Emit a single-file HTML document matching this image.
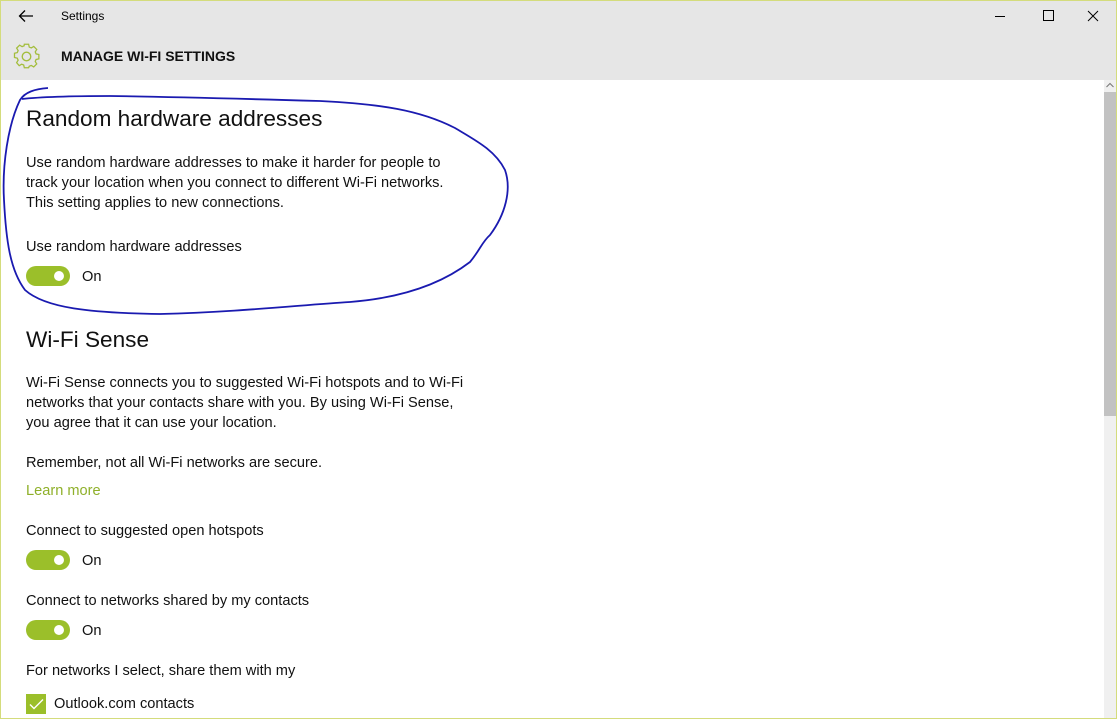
<!DOCTYPE html>
<html><head><style>
body{margin:0;width:1117px;height:719px;overflow:hidden;font-family:"Liberation Sans",sans-serif;background:#fff;position:relative}
.frame{position:absolute;inset:0;border:1px solid #d4dc7c;box-sizing:border-box;pointer-events:none;z-index:5}
.hdr{position:absolute;left:0;top:0;width:1117px;height:80px;background:#e6e6e6}
.t{position:absolute;color:#000;white-space:nowrap}
.p{font-size:14.6px;line-height:20px;color:#111}
.h{font-size:22.6px;color:#111}
.tog{position:absolute;left:26px;width:44px;height:20px;border-radius:10px;background:#9bbf2a}
.tog::after{content:"";position:absolute;right:6px;top:5px;width:10px;height:10px;border-radius:50%;background:#fff}
</style></head><body>
<div class="hdr"></div>
<svg style="position:absolute;left:18px;top:9px" width="16" height="14"><path d="M15 7H2M7 1.5L1.5 7 7 12.5" stroke="#000" stroke-width="1.3" fill="none"/></svg>
<div class="t" style="left:61px;top:9px;font-size:12px">Settings</div>
<svg style="position:absolute;left:994px;top:10px" width="110" height="12"><path d="M1 6.5h10" stroke="#000"/><path d="M49.5 0.5h10v10h-10z" stroke="#000" fill="none"/><path d="M94 1l10 10M104 1L94 11" stroke="#000"/></svg>
<svg style="position:absolute;left:13px;top:43px" width="27" height="27" viewBox="0 0 24 24"><path d="M10 2h4l.6 2.6 1.9.8 2.3-1.4 2.8 2.8-1.4 2.3.8 1.9L23.6 11.6v4l-2.6.6-.8 1.9 1.4 2.3-2.8 2.8-2.3-1.4-1.9.8L14 24h-4l-.6-2.6-1.9-.8-2.3 1.4-2.4-2.8 1.4-2.3-.8-1.9L.8 14.4v-4l2.6-.6.8-1.9-1.4-2.3 2.8-2.8 2.3 1.4 1.9-.8z" transform="scale(.95) translate(.6 -.8)" fill="none" stroke="#a3bd3c" stroke-width="1.2"/><circle cx="12" cy="12" r="3.8" fill="none" stroke="#a3bd3c" stroke-width="1.2"/></svg>
<div class="t" style="left:61px;top:48px;font-size:14px;font-weight:bold;color:#111">MANAGE WI-FI SETTINGS</div>
<div style="position:absolute;left:1104px;top:80px;width:12px;height:639px;background:#f0f0f0"></div>
<div style="position:absolute;left:1104px;top:92px;width:12px;height:324px;background:#c2c2c2"></div>
<svg style="position:absolute;left:1106px;top:82px" width="8" height="6"><path d="M0.5 5L4 1.5 7.5 5" stroke="#777" fill="none"/></svg>
<div class="t h" style="left:26px;top:106px">Random hardware addresses</div>
<div class="t p" style="left:26px;top:153px">Use random hardware addresses to make it harder for people to<br>track your location when you connect to different Wi-Fi networks.<br>This setting applies to new connections.</div>
<div class="t p" style="left:26px;top:237px">Use random hardware addresses</div>
<div class="tog" style="top:266px"></div><div class="t p" style="left:82px;top:267px">On</div>
<div class="t h" style="left:26px;top:327px">Wi-Fi Sense</div>
<div class="t p" style="left:26px;top:373px">Wi-Fi Sense connects you to suggested Wi-Fi hotspots and to Wi-Fi<br>networks that your contacts share with you. By using Wi-Fi Sense,<br>you agree that it can use your location.</div>
<div class="t p" style="left:26px;top:453px">Remember, not all Wi-Fi networks are secure.</div>
<div class="t p" style="left:26px;top:481px;color:#8fb02a">Learn more</div>
<div class="t p" style="left:26px;top:521px">Connect to suggested open hotspots</div>
<div class="tog" style="top:550px"></div><div class="t p" style="left:82px;top:551px">On</div>
<div class="t p" style="left:26px;top:591px">Connect to networks shared by my contacts</div>
<div class="tog" style="top:620px"></div><div class="t p" style="left:82px;top:621px">On</div>
<div class="t p" style="left:26px;top:661px">For networks I select, share them with my</div>
<div style="position:absolute;left:26px;top:694px;width:20px;height:20px;background:#9bbf2a"></div>
<svg style="position:absolute;left:26px;top:694px" width="20" height="20"><path d="M4 10.5l4 4 9-9" stroke="#fff" stroke-width="1.4" fill="none"/></svg>
<div class="t p" style="left:54px;top:694px">Outlook.com contacts</div>
<svg style="position:absolute;left:0;top:0" width="1117" height="719"><path d="M48 88C35 89 25 92 20 100C8 125 2 165 4 200C6 240 10 270 25 290C45 308 90 313 160 314C240 312 300 305 350 302C400 298 440 285 470 262C480 250 482 242 490 235C505 215 512 190 505 170C495 150 475 140 455 128C420 110 380 104 320 101C250 99 180 97 110 96C70 96 40 97 22 99" stroke="#1a1ab0" stroke-width="1.8" fill="none"/></svg>
<div class="frame"></div>
</body></html>
